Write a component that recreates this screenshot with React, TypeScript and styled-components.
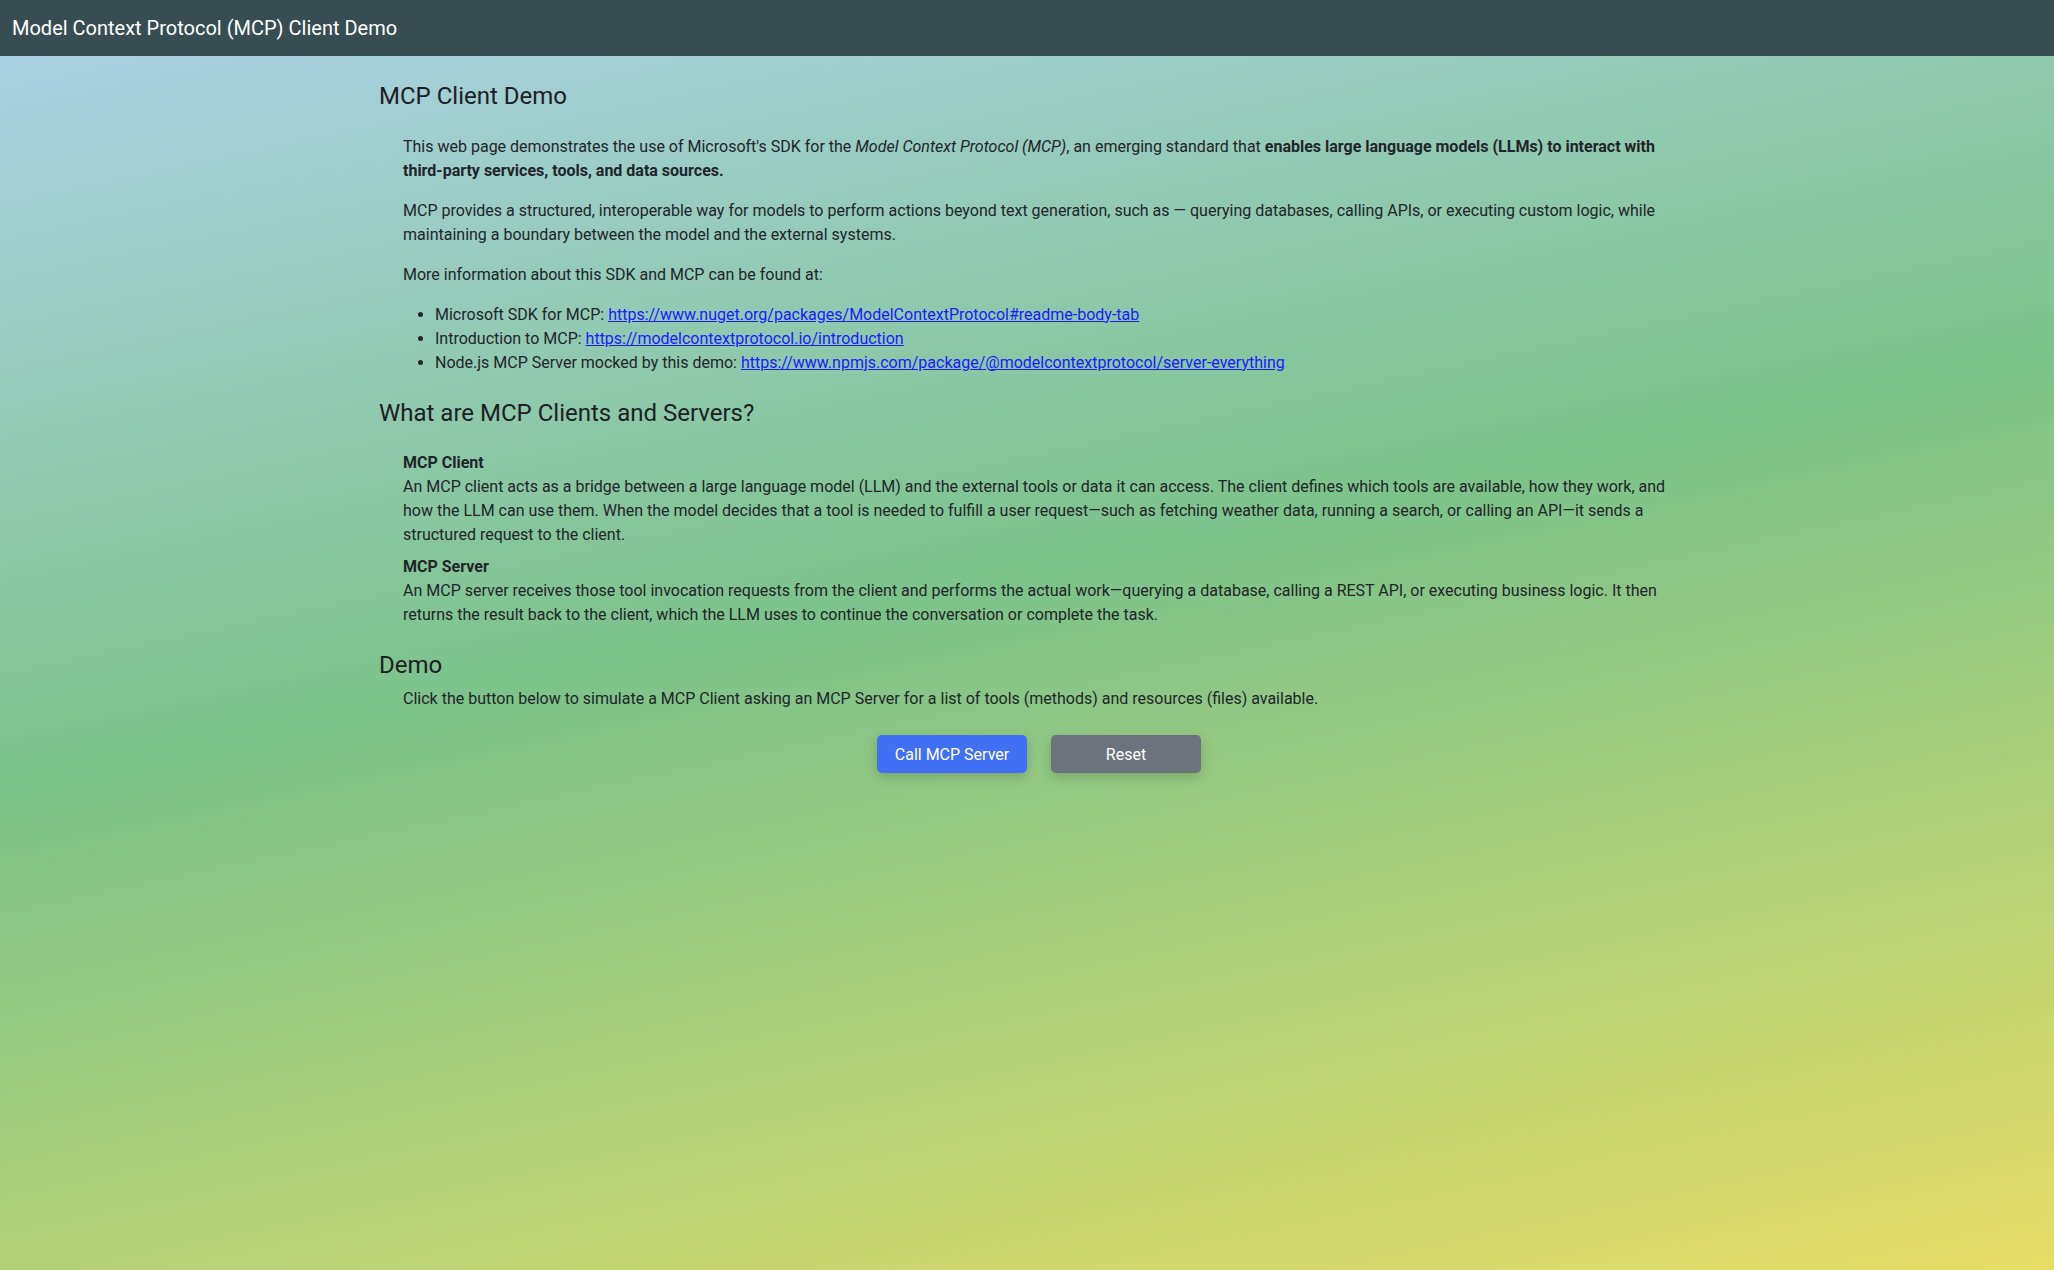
import styled, { createGlobalStyle } from "styled-components";

const GlobalStyle = createGlobalStyle`
  html, body {
    margin: 0;
    padding: 0;
  }

  body {
    font-family: "Segoe UI", Roboto, "Noto Sans", "Liberation Sans", Arial, sans-serif;
    font-size: 16px;
    line-height: 1.5;
    color: #212529;
  }

  * {
    box-sizing: border-box;
  }
`;

function App() {
  return (
    <>
      <GlobalStyle />
      <NavBar>
        <Brand>Model Context Protocol (MCP) Client Demo</Brand>
      </NavBar>

      <Page>
        <Container>
          <Heading>MCP Client Demo</Heading>
          <Section $top={24}>
            <Para>
              This web page demonstrates the use of Microsoft's SDK for the <em>Model Context Protocol (MCP)</em>, an
              emerging standard that <strong>enables large language models (LLMs) to interact with third-party
              services, tools, and data sources.</strong>
            </Para>
            <Para>
              MCP provides a structured, interoperable way for models to perform actions beyond text generation, such
              as — querying databases, calling APIs, or executing custom logic, while maintaining a boundary between
              the model and the external systems.
            </Para>
            <Para>More information about this SDK and MCP can be found at:</Para>
            <LinkList>
              <li>
                Microsoft SDK for MCP:{" "}
                <Link href="#">https://www.nuget.org/packages/ModelContextProtocol#readme-body-tab</Link>
              </li>
              <li>
                Introduction to MCP: <Link href="#">https://modelcontextprotocol.io/introduction</Link>
              </li>
              <li>
                Node.js MCP Server mocked by this demo:{" "}
                <Link href="#">https://www.npmjs.com/package/@modelcontextprotocol/server-everything</Link>
              </li>
            </LinkList>
          </Section>

          <Heading>What are MCP Clients and Servers?</Heading>
          <Section $top={23}>
            <Definition>
              <Term>MCP Client</Term>
              An MCP client acts as a bridge between a large language model (LLM) and the external tools or data it can
              access. The client defines which tools are available, how they work, and how the LLM can use them. When
              the model decides that a tool is needed to fulfill a user request—such as fetching weather data, running
              a search, or calling an API—it sends a structured request to the client.
            </Definition>
            <Definition>
              <Term>MCP Server</Term>
              An MCP server receives those tool invocation requests from the client and performs the actual
              work—querying a database, calling a REST API, or executing business logic. It then returns the result
              back to the client, which the LLM uses to continue the conversation or complete the task.
            </Definition>
          </Section>

          <Heading>Demo</Heading>
          <Section $top={0}>
            <Para $last>
              Click the button below to simulate a MCP Client asking an MCP Server for a list of tools (methods) and
              resources (files) available.
            </Para>
            <ButtonRow>
              <ActionButton $variant="primary">Call MCP Server</ActionButton>
              <ActionButton $variant="secondary">Reset</ActionButton>
            </ButtonRow>
          </Section>
        </Container>
      </Page>
    </>
  );
}

export default App;

const NavBar = styled.header`
  height: 56px;
  background-color: #374d52;
  display: flex;
  align-items: center;
  padding: 0 12px;
`;

const Brand = styled.span`
  color: #ffffff;
  font-size: 20px;
  line-height: 1.5;
`;

const Page = styled.main`
  min-height: calc(100vh - 56px);
  background: linear-gradient(168deg, #aad2e3 0%, #7cc38a 45%, #e7dd66 100%);
  padding-top: 26px;
`;

const Container = styled.div`
  max-width: 1320px;
  margin: 0 auto;
  padding: 0 12px;
`;

const Heading = styled.h4`
  font-size: 24px;
  font-weight: 400;
  line-height: 1.2;
  margin: 0 0 8px;
  color: #1c2024;
`;

const Section = styled.div<{ $top: number }>`
  display: flow-root;
  margin: ${(p) => p.$top}px 0 8px 24px;
`;

const Para = styled.p<{ $last?: boolean }>`
  margin: 0 0 ${(p) => (p.$last ? 24 : 16)}px;
`;

const LinkList = styled.ul`
  margin: 0 0 16px;
  padding-left: 32px;
`;

const Link = styled.a`
  color: #1a1aff;
  text-decoration: underline;
`;

const Definition = styled.div`
  margin-bottom: 8px;

  &:last-child {
    margin-bottom: 16px;
  }
`;

const Term = styled.strong`
  display: block;
  font-weight: 700;
`;

const ButtonRow = styled.div`
  display: flex;
  justify-content: center;
  gap: 24px;
`;

const ActionButton = styled.button<{ $variant: "primary" | "secondary" }>`
  width: 150px;
  height: 38px;
  border: none;
  border-radius: 5px;
  font-family: inherit;
  font-size: 16px;
  color: #ffffff;
  cursor: pointer;
  background-color: ${(p) => (p.$variant === "primary" ? "#4170f4" : "#6c737c")};
  box-shadow: 0 4px 12px rgba(0, 0, 0, 0.18);
`;
